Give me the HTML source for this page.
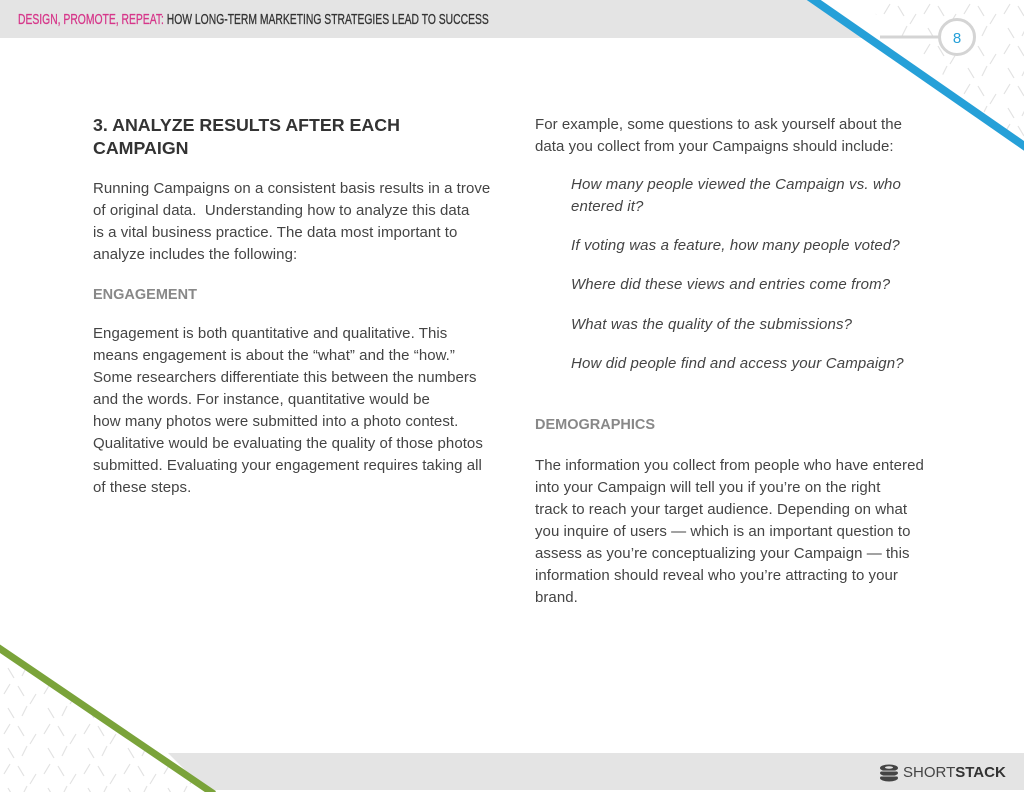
<!DOCTYPE html>
<html><head><meta charset="utf-8"><style>
body{margin:0;width:1024px;height:792px;position:relative;overflow:hidden;background:#fff;font-family:"Liberation Sans",sans-serif;color:#444}
.l{position:absolute;white-space:nowrap;font-size:15px;letter-spacing:0.05px;line-height:22px;height:22px}
.i{font-style:italic;letter-spacing:0.15px}
.h{position:absolute;white-space:nowrap;font-weight:bold;font-size:17.8px;line-height:23px;color:#333}
.s{position:absolute;white-space:nowrap;font-weight:bold;font-size:14.5px;color:#888;line-height:22px}
</style></head><body>
<svg width="1024" height="792" style="position:absolute;left:0;top:0">
<defs><pattern id="p" width="40" height="40" patternUnits="userSpaceOnUse">
<g stroke="#e2e2e2" stroke-width="1.2"><line x1="4" y1="14" x2="10" y2="4"/><line x1="18" y1="6" x2="24" y2="16"/><line x1="30" y1="24" x2="36" y2="14"/><line x1="8" y1="28" x2="14" y2="38"/><line x1="22" y1="36" x2="27" y2="26"/></g></pattern></defs>
<polygon points="0,0 810,0 866,38 0,38" fill="#e4e4e4"/>
<polygon points="860,0 1024,0 1024,148" fill="url(#p)"/>
<polygon points="0,650 212,792 0,792" fill="url(#p)"/>
<polygon points="168,753 1024,753 1024,790 205,790" fill="#e4e4e4"/>
<line x1="880" y1="37" x2="940" y2="37" stroke="#d4d4d4" stroke-width="3"/>
<line x1="808" y1="-4" x2="1030" y2="150" stroke="#26a0d8" stroke-width="8"/>
<circle cx="957" cy="37" r="17.5" fill="#fff" stroke="#d4d4d4" stroke-width="3"/>
<text x="957" y="43" font-family="Liberation Sans" font-size="15" fill="#26a0d8" text-anchor="middle">8</text>
<line x1="-4" y1="646" x2="214" y2="794" stroke="#7aa33a" stroke-width="7"/>
</svg>
<div style="position:absolute;left:18px;top:11px;font-family:'Liberation Sans',sans-serif;font-size:15px;white-space:nowrap;transform:scaleX(0.69);transform-origin:left;-webkit-text-stroke:0.3px"><span style="color:#d6378a">DESIGN, PROMOTE, REPEAT:</span> <span style="color:#333">HOW LONG-TERM MARKETING STRATEGIES LEAD TO SUCCESS</span></div>

<div class="h" style="left:93px;top:114px">3. ANALYZE RESULTS AFTER EACH</div>
<div class="h" style="left:93px;top:137px">CAMPAIGN</div>
<div class="l" style="left:93px;top:178px">Running Campaigns on a consistent basis results in a trove</div>
<div class="l" style="left:93px;top:200px">of original data.&nbsp; Understanding how to analyze this data</div>
<div class="l" style="left:93px;top:222px">is a vital business practice. The data most important to</div>
<div class="l" style="left:93px;top:244px">analyze includes the following:</div>
<div class="s" style="left:93px;top:284px">ENGAGEMENT</div>
<div class="l" style="left:93px;top:323px">Engagement is both quantitative and qualitative. This</div>
<div class="l" style="left:93px;top:345px">means engagement is about the “what” and the “how.”</div>
<div class="l" style="left:93px;top:367px">Some researchers differentiate this between the numbers</div>
<div class="l" style="left:93px;top:389px">and the words. For instance, quantitative would be</div>
<div class="l" style="left:93px;top:411px">how many photos were submitted into a photo contest.</div>
<div class="l" style="left:93px;top:433px">Qualitative would be evaluating the quality of those photos</div>
<div class="l" style="left:93px;top:455px">submitted. Evaluating your engagement requires taking all</div>
<div class="l" style="left:93px;top:477px">of these steps.</div>

<div class="l" style="left:535px;top:114px">For example, some questions to ask yourself about the</div>
<div class="l" style="left:535px;top:136px">data you collect from your Campaigns should include:</div>
<div class="l i" style="left:571px;top:174px">How many people viewed the Campaign vs. who</div>
<div class="l i" style="left:571px;top:196px">entered it?</div>
<div class="l i" style="left:571px;top:235px">If voting was a feature, how many people voted?</div>
<div class="l i" style="left:571px;top:274px">Where did these views and entries come from?</div>
<div class="l i" style="left:571px;top:314px">What was the quality of the submissions?</div>
<div class="l i" style="left:571px;top:353px">How did people find and access your Campaign?</div>
<div class="s" style="left:535px;top:414px">DEMOGRAPHICS</div>
<div class="l" style="left:535px;top:455px">The information you collect from people who have entered</div>
<div class="l" style="left:535px;top:477px">into your Campaign will tell you if you’re on the right</div>
<div class="l" style="left:535px;top:499px">track to reach your target audience. Depending on what</div>
<div class="l" style="left:535px;top:521px">you inquire of users — which is an important question to</div>
<div class="l" style="left:535px;top:543px">assess as you’re conceptualizing your Campaign — this</div>
<div class="l" style="left:535px;top:565px">information should reveal who you’re attracting to your</div>
<div class="l" style="left:535px;top:587px">brand.</div>

<svg width="20" height="20" style="position:absolute;left:879px;top:763px" viewBox="0 0 20 20">
<g fill="#444"><ellipse cx="10" cy="5" rx="9" ry="3.5"/><ellipse cx="10" cy="10" rx="9" ry="3.2"/><ellipse cx="10" cy="15" rx="9" ry="3.5"/></g>
<g fill="#e4e4e4"><ellipse cx="10" cy="4.5" rx="4" ry="1.3"/><rect x="1" y="7.6" width="18" height="0.9"/><rect x="1" y="12.6" width="18" height="0.9"/></g></svg>
<div style="position:absolute;left:903px;top:764px;font-size:15px;color:#444;white-space:nowrap">SHORT<b style="color:#333">STACK</b></div>
</body></html>
